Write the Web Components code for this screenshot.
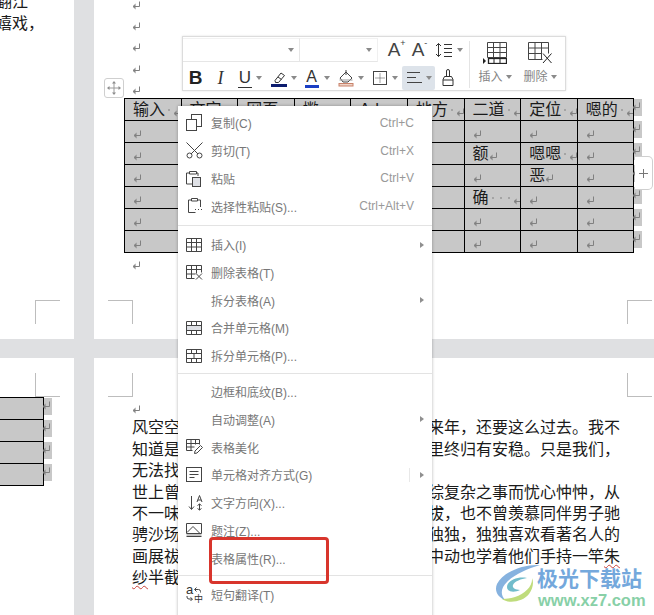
<!DOCTYPE html>
<html lang="zh-CN">
<head>
<meta charset="utf-8">
<title>表格右键菜单</title>
<style>
html, body { margin: 0; padding: 0; overflow: hidden; }
body { width: 654px; height: 615px; font-family: "Liberation Sans", "Noto Sans CJK SC", sans-serif; color: #000; }
</style>
</head>
<body>

<doc-view>
  <doc-page slot="a">
    <crop-mark corner="tl" style="left:35px;top:300px"></crop-mark>
    <doc-text top="-8.7" left="-4">
      <text-line start="翻江"></text-line>
      <text-line start="嬉戏，"></text-line>
    </doc-text>
  </doc-page>

  <doc-page slot="b">
    <crop-mark corner="tr" style="left:14px;top:300px"></crop-mark>
    <crop-mark corner="tl" style="left:533px;top:300px"></crop-mark>
    <doc-text top="-8.7" left="38">
      <text-line mark></text-line>
      <text-line mark></text-line>
      <text-line mark></text-line>
      <text-line mark></text-line>
      <text-line mark></text-line>
      <word-table id="mainTable" style="margin-left:-8px"></word-table>
      <text-line mark></text-line>
    </doc-text>
  </doc-page>

  <doc-page slot="c">
    <crop-mark corner="bl" style="left:35px;top:15px"></crop-mark>
    <doc-text top="39" left="-16">
      <word-table id="sideTable"></word-table>
    </doc-text>
  </doc-page>

  <doc-page slot="d">
    <crop-mark corner="br" style="left:14px;top:15px"></crop-mark>
    <crop-mark corner="bl" style="left:533px;top:15px"></crop-mark>
    <doc-text top="38" left="38">
      <text-line mark></text-line>
      <text-line start="风空空" end="来年，还要这么过去。我不"></text-line>
      <text-line start="知道是" end="里终归有安稳。只是我们，"></text-line>
      <text-line start="无法找"></text-line>
      <text-line start="世上曾" end="综复杂之事而忧心忡忡，从"></text-line>
      <text-line start="不一味" end="拔，也不曾羡慕同伴男子驰"></text-line>
      <text-line start="骋沙场" end="独独，独独喜欢看著名人的"></text-line>
      <text-line start="画展祓" end="中动也学着他们手持一竿" typo-end="朱"></text-line>
      <text-line typo-start="纱" start="半截"></text-line>
    </doc-text>
  </doc-page>
</doc-view>

<move-handle></move-handle>
<add-handle></add-handle>

<float-toolbar>
  <tool-btn slot="top" w="24" style="margin-left:4px"><span style="font-size:19px;line-height:20px;color:#444">A<sup style="font-size:9px;line-height:9px;position:absolute;margin-top:-1px">+</sup></span></tool-btn>
  <tool-btn slot="top" w="24"><span style="font-size:19px;line-height:20px;color:#444">A<sup style="font-size:9px;line-height:9px;position:absolute;margin-top:-1px">-</sup></span></tool-btn>
  <tool-btn slot="top" w="37" arrow>
    <svg width="18" height="16" fill="none" stroke="#333"><path d="M3.500 1.500v13M1 4l2.500-2.500L6 4M1 12l2.500 2.500L6 12M9 2.500h8M9 6.500h8M9 10.500h8M9 14.500h8"/></svg>
  </tool-btn>

  <tool-btn slot="bottom" w="25"><span style="font:bold 19px/20px 'Liberation Sans';color:#222">B</span></tool-btn>
  <tool-btn slot="bottom" w="25"><span style="font:italic 18px/20px 'Liberation Serif';color:#333">I</span></tool-btn>
  <tool-btn slot="bottom" w="34" arrow><span style="font:17px/18px 'Liberation Sans';color:#333;border-bottom:1px solid #333;padding:0 1px">U</span></tool-btn>
  <tool-btn slot="bottom" w="33" arrow>
    <svg width="16" height="18" fill="none" stroke="#333"><path d="M4 11.500l6-7.500 3.500 2.500-6 7H4.500zM7 8l3.500 2.500"/><rect x="0" y="15" width="16" height="3" fill="#0c1c6e" stroke="none"/></svg>
  </tool-btn>
  <tool-btn slot="bottom" w="33" arrow>
    <span style="display:inline-flex;flex-direction:column;align-items:center;width:16px;font:16px/15px 'Liberation Sans';color:#333">A<i style="display:block;width:14px;height:3px;background:#1c3fc4;margin-top:1px"></i></span>
  </tool-btn>
  <tool-btn slot="bottom" w="35" arrow>
    <svg width="16" height="18" fill="none" stroke="#444"><path d="M2 9l6-6 6 6-4 4H5zM8 1v5"/><path d="M1.500 11l13-0" stroke="#999"/><rect x="1" y="14.500" width="14" height="2.500" fill="#eed4c8" stroke="#c9826a"/></svg>
  </tool-btn>
  <tool-btn slot="bottom" w="34" arrow>
    <svg width="16" height="16" fill="none" stroke="#444"><rect x="1.500" y="1.500" width="13" height="13"/><path d="M8 3.500v9M3.500 8h9" stroke-dasharray="1 1"/></svg>
  </tool-btn>
  <tool-btn slot="bottom" w="33" arrow active>
    <svg width="16" height="14" fill="none" stroke="#444"><path d="M1 1.500h13M1 6.500h9M1 11.500h15"/></svg>
  </tool-btn>
  <tool-btn slot="bottom" w="26">
    <svg width="14" height="18" fill="none" stroke="#333"><path d="M5.500 7.500v-5.500a1.500 1.500 0 0 1 3 0v5.500M3.500 7.500h7l1.500 3v6H2v-6zM2 11h10"/></svg>
  </tool-btn>

  <big-btn slot="big" label="插入" w="50">
    <svg width="24" height="22" fill="none" stroke="#444"><path d="M4.500 .5h19v15h-19zM4.500 5.500h19M4.500 10.500h19M10.500 .5v15M17 .5v15"/><rect x="5.500" y="16.500" width="18" height="5" stroke="#222" stroke-width="1.300"/><path d="M11 16.500v5M17 16.500v5" stroke="#222"/><path d="M0 16l3 3-3 3z" fill="#222" stroke="none"/></svg>
  </big-btn>
  <big-btn slot="big" label="删除" w="40">
    <svg width="25" height="22" fill="none" stroke="#444"><path d="M.5 .5h20v11M.5 .5v17h14M.5 6h20M.5 11.500h13M7 .5v17M13.500 .5v17"/><path d="M15 11.500l8.500 9.500M23.500 11.500L15 21" stroke="#222"/></svg>
  </big-btn>
</float-toolbar>

<context-menu>
  <menu-item label="复制(C)" key="Ctrl+C">
    <svg slot="icon" width="16" height="17" fill="none" stroke="#444"><rect x="5.500" y=".5" width="10" height="12" fill="#fff"/><rect x=".5" y="5.500" width="10" height="11" fill="#fff"/></svg>
  </menu-item>
  <menu-item label="剪切(T)" key="Ctrl+X">
    <svg slot="icon" width="17" height="17" fill="none" stroke="#444"><circle cx="3.500" cy="13.500" r="2.500"/><circle cx="13.500" cy="13.500" r="2.500"/><path d="M.5 .5l11.500 11.500M16.500 .5L5 12"/></svg>
  </menu-item>
  <menu-item label="粘贴" key="Ctrl+V">
    <svg slot="icon" width="16" height="17" fill="none" stroke="#444"><path d="M4 3H.5v11H6"/><path d="M3.500 1.500h7V4h-7z"/><path d="M10.500 3H12v3"/><rect x="6.500" y="7.500" width="8" height="9" fill="#dfe1e6"/></svg>
  </menu-item>
  <menu-item label="选择性粘贴(S)..." key="Ctrl+Alt+V">
    <svg slot="icon" width="16" height="16" fill="none" stroke="#444" style="margin-left:2px"><path d="M3.500 2H.5v12.500h7M9.500 2h3v7"/><path d="M3.500 .5h6V3h-6z"/><path d="M7 11.500h1M10 11.500h1M13 11.500h1"/></svg>
  </menu-item>
  <menu-sep style="--above:4.500px;--below:5px"></menu-sep>
  <menu-item label="插入(I)" arrow>
    <svg slot="icon" width="16" height="14" fill="none" stroke="#444"><path d="M.5 .5h15v13H.5zM.5 4.500h15M.5 9h15M5.500 .5v13M10.500 .5v13"/></svg>
  </menu-item>
  <menu-item label="删除表格(T)">
    <svg slot="icon" width="17" height="15" fill="none" stroke="#444"><path d="M.5 .5h15v7M.5 .5v13h8M.5 4.500h15M.5 9h9M5.500 .5v13M10.500 .5v8"/><path d="M10 8.500l6 6M16 8.500l-6 6"/></svg>
  </menu-item>
  <menu-item label="拆分表格(A)" arrow></menu-item>
  <menu-item label="合并单元格(M)">
    <svg slot="icon" width="16" height="14" fill="none" stroke="#444"><rect x=".5" y="4.500" width="15" height="5" fill="#dfe1e6" stroke="none"/><path d="M.5 .5h15v13H.5zM.5 4.500h15M.5 9.500h15M5.500 .5v4M10.500 .5v4M5.500 9.500v4M10.500 9.500v4"/></svg>
  </menu-item>
  <menu-item label="拆分单元格(P)...">
    <svg slot="icon" width="16" height="14" fill="none" stroke="#444"><path d="M.5 .5h15v13H.5zM.5 4.500h15M.5 9.500h15M5.500 .5v4M10.500 .5v4M8 4.500v5M5.500 9.500v4M10.500 9.500v4"/></svg>
  </menu-item>
  <menu-sep></menu-sep>
  <menu-item label="边框和底纹(B)..."></menu-item>
  <menu-item label="自动调整(A)" arrow></menu-item>
  <menu-item label="表格美化">
    <svg slot="icon" width="17" height="16" fill="none" stroke="#444"><path d="M.5 .5h13v5M.5 .5v11h6M.5 4.500h13M.5 8h8M5 .5v11M9.500 .5v5"/><path d="M8.500 14.500l.5-2.500 5.500-5.500 2 2-5.500 5.500z"/></svg>
  </menu-item>
  <menu-item label="单元格对齐方式(G)" arrow divider>
    <svg slot="icon" width="16" height="15" fill="none" stroke="#444"><rect x=".5" y=".5" width="15" height="14"/><path d="M3.500 4.500h9M3.500 7.500h9M3.500 10.500h5"/></svg>
  </menu-item>
  <menu-item label="文字方向(X)...">
    <svg slot="icon" width="15" height="16" fill="none" stroke="#444" style="margin-left:2px"><path d="M3.500 1v13M1 11.500l2.500 3 2.500-3M11.500 9v6M9.500 10.500l2-1.500 2 1.500M9.500 13.500l2 1.500 2-1.500"/><path d="M9 7l2.500-6.500L14 7M9.800 5h3.400"/></svg>
  </menu-item>
  <menu-item label="题注(Z)...">
    <svg slot="icon" width="16" height="15" fill="none" stroke="#444"><path d="M.5 .5h15v10H.5zM1 9.500l6-6 6.500 6.500M.5 13.500h15"/><path d="M.5 12h15" stroke="#888"/></svg>
  </menu-item>
  <menu-item label="表格属性(R)..."></menu-item>
  <menu-sep></menu-sep>
  <menu-item label="短句翻译(T)">
    <svg slot="icon" width="17" height="18" fill="none" stroke="#444" style="overflow:visible"><text x="0" y="9" font-family="Liberation Sans" font-size="13" fill="#333" stroke="none">a</text><text x="8" y="17" font-family="Noto Sans CJK SC" font-size="9" fill="#333" stroke="none">中</text><path d="M9 4.500h3.500a2 2 0 0 1 2 2v1M10.500 2.500l-2 2 2 2M1 11v1a2 2 0 0 0 2 2h3M4.500 12.500l2 1.500-2 2"/></svg>
  </menu-item>
  <menu-item>
    <svg slot="icon" width="16" height="14" fill="none" stroke="#444"><path d="M8 4.500v9M5 7l3-3 3 3"/></svg>
  </menu-item>
</context-menu>

<note-box></note-box>
<site-badge></site-badge>

<script>
const markSvg = '<svg width="9" height="9" viewBox="0 0 9 9" fill="none" stroke="#808080"><path d="M7.500 .5V5.500H2"/><path d="M3.500 3.200L1 5.500l2.500 2.300" fill="#808080"/></svg>'

const viewTemplate = document.createElement('template')
viewTemplate.innerHTML = `
<style>
:host { display: block; width: 654px; height: 615px; overflow: hidden; background: #dfe0e2; }
#grid {
  display: grid;
  grid-template-columns: 74px 560px;
  grid-template-rows: 339px 257px;
  column-gap: 20px;
  row-gap: 19px;
  width: 654px;
}
</style>
<div id="grid">
  <slot name="a"></slot>
  <slot name="b"></slot>
  <slot name="c"></slot>
  <slot name="d"></slot>
</div>`

class DocView extends HTMLElement {
  constructor () {
    super()
    this.attachShadow({ mode: 'open' }).appendChild(viewTemplate.content.cloneNode(true))
  }
}
customElements.define('doc-view', DocView)

class DocPage extends HTMLElement {
  constructor () {
    super()
    this.attachShadow({ mode: 'open' }).innerHTML = `
    <style>
    :host { display: block; position: relative; background: #fff; overflow: hidden; height: 100%; }
    </style>
    <slot></slot>`
  }
}
customElements.define('doc-page', DocPage)

// margin corner marks sit on the page itself, not in the text flow
class CropMark extends HTMLElement {
  constructor () {
    super()
    const c = this.getAttribute('corner')
    const line = '1px solid #bdbdbd'
    const sides = {
      tl: `border-top:${line};border-left:${line}`,
      tr: `border-top:${line};border-right:${line}`,
      bl: `border-bottom:${line};border-left:${line}`,
      br: `border-bottom:${line};border-right:${line}`
    }
    this.attachShadow({ mode: 'open' }).innerHTML = `
    <style>
    :host { display: block; position: absolute; box-sizing: border-box; width: 25px; height: 24px; ${sides[c]}; }
    </style>`
  }
}
customElements.define('crop-mark', CropMark)

class DocText extends HTMLElement {
  constructor () {
    super()
    this.attachShadow({ mode: 'open' }).innerHTML = `
    <style>
    :host { display: block; margin-top: ${this.getAttribute('top')}px; margin-left: ${this.getAttribute('left')}px; }
    </style>
    <slot></slot>`
  }
}
customElements.define('doc-text', DocText)

class TextLine extends HTMLElement {
  constructor () {
    super()
    this.attachShadow({ mode: 'open' })
  }

  connectedCallback () {
    const wavy = t => t ? `<span class="typo">${t}</span>` : ''
    const start = this.getAttribute('start') || ''
    const end = this.getAttribute('end') || ''
    const mark = this.hasAttribute('mark') ? `<span class="mark">${markSvg}</span>` : ''
    this.shadowRoot.innerHTML = `
    <style>
    :host { display: flex; justify-content: space-between; align-items: center; width: 488px; height: 21.4px; font-size: 16px; line-height: 21.4px; white-space: nowrap; color: #1a1a1a; }
    .mark { display: flex; margin-top: 6px; }
    .typo { text-decoration: underline wavy #c9433a 1px; text-underline-offset: 2px; }
    </style>
    <span>${mark}${wavy(this.getAttribute('typo-start'))}${start}</span>
    <span>${end}${wavy(this.getAttribute('typo-end'))}</span>`
  }
}
customElements.define('text-line', TextLine)

class WordTable extends HTMLElement {
  constructor () {
    super()
    this.attachShadow({ mode: 'open' })
  }

  // rows: array of rows, each cell is [text, number of space dots]
  setData (rows, colWidth) {
    let html = ''
    rows.forEach((row, r) => {
      html += '<div class="row">'
      row.forEach(cell => {
        let dots = ''
        for (let i = 0; i < (cell[1] || 0); i++) dots += '<i></i>'
        html += `<div class="cell"><span>${cell[0] || ''}</span>${dots}<b>${markSvg}</b></div>`
      })
      html += `<div class="end"><u>${markSvg}</u></div></div>`
    })
    this.shadowRoot.innerHTML = `
    <style>
    :host { display: block; font-size: 16px; color: #1a1a1a; }
    .row { display: flex; height: 22px; }
    .cell {
      box-sizing: border-box; flex: none; width: ${colWidth}px; height: 23px;
      display: flex; align-items: center; padding-left: 8px; overflow: hidden;
      background: #c8c8c8; border: 1px solid #000; margin-right: -1px; white-space: nowrap;
    }
    .cell span { line-height: 21px; }
    i { flex: none; display: flex; width: 8px; height: 8px; position: relative; }
    i::after { content: ""; position: absolute; left: 3px; top: 3px; width: 2px; height: 2px; border-radius: 50%; background: #999; }
    b { display: flex; flex: none; margin-top: 6px; }
    .end { margin-left: 1px; width: 8px; height: 17px; background: #c8c8c8; margin-top: 1px; }
    u { display: flex; margin-top: 3px; margin-left: -2px; }
    </style>${html}`
  }
}
customElements.define('word-table', WordTable)

class MoveHandle extends HTMLElement {
  constructor () {
    super()
    this.attachShadow({ mode: 'open' }).innerHTML = `
    <style>
    :host { position: absolute; left: 104px; top: 78px; box-sizing: border-box; width: 20px; height: 20px; background: #fff; border: 1px solid #cfcfcf; border-radius: 3px; display: flex; align-items: center; justify-content: center; }
    </style>
    <svg width="14" height="14" viewBox="0 0 14 14" fill="#8c8c8c" stroke="#9a9a9a"><path d="M7 2v10M2 7h10" fill="none"/><path d="M7 0l2 2.500H5zM7 14l2-2.500H5zM0 7l2.500-2v4zM14 7l-2.500-2v4z" stroke="none"/></svg>`
  }
}
customElements.define('move-handle', MoveHandle)

class AddHandle extends HTMLElement {
  constructor () {
    super()
    this.attachShadow({ mode: 'open' }).innerHTML = `
    <style>
    :host { position: absolute; left: 635px; top: 156px; box-sizing: border-box; width: 18px; height: 34px; background: #fff; border: 1px solid #cfcfcf; border-left: 0; border-radius: 0 5px 5px 0; display: flex; align-items: center; justify-content: center; }
    </style>
    <svg width="9" height="9" stroke="#777"><path d="M4.500 0v9M0 4.500h9"/></svg>`
  }
}
customElements.define('add-handle', AddHandle)

const toolbarTemplate = document.createElement('template')
toolbarTemplate.innerHTML = `
<style>
:host {
  position: absolute; left: 182px; top: 36px; box-sizing: border-box; width: 384px; height: 55px;
  background: #fff; border: 1px solid #dcdcdc; box-shadow: 0 0 2px rgba(0,0,0,.12);
  display: flex; padding-top: 1px;
}
#left { display: flex; flex-direction: column; width: 286px; }
#top { display: flex; height: 25px; align-items: stretch; }
.combo { box-sizing: border-box; height: 24px; border-bottom: 1px solid #e6e6e6; border-top: 1px solid #f2f2f2; display: flex; align-items: center; justify-content: flex-end; padding-right: 5px; }
#name { width: 117px; border-right: 1px solid #e6e6e6; }
#size { width: 78px; border-right: 1px solid #f0f0f0; }
.caret { width: 0; height: 0; border: 3px solid transparent; border-top: 4px solid #8a8a8a; border-bottom: 0; }
#bottom { display: flex; margin-top: 3px; height: 24px; }
#sep { width: 1px; height: 47px; background: #e4e4e4; margin-top: 3px; }
#big { display: flex; }
</style>
<div id="left">
  <div id="top">
    <div class="combo" id="name"><span class="caret"></span></div>
    <div class="combo" id="size"><span class="caret"></span></div>
    <slot name="top"></slot>
  </div>
  <div id="bottom"><slot name="bottom"></slot></div>
</div>
<div id="sep"></div>
<div id="big"><slot name="big"></slot></div>`

class FloatToolbar extends HTMLElement {
  constructor () {
    super()
    this.attachShadow({ mode: 'open' }).appendChild(toolbarTemplate.content.cloneNode(true))
  }
}
customElements.define('float-toolbar', FloatToolbar)

class ToolBtn extends HTMLElement {
  constructor () {
    super()
    this.attachShadow({ mode: 'open' })
  }

  connectedCallback () {
    const active = this.hasAttribute('active')
    this.shadowRoot.innerHTML = `
    <style>
    :host { box-sizing: border-box; flex: none; width: ${this.getAttribute('w')}px; height: 24px; display: flex; align-items: center; justify-content: center; gap: 4px; border-radius: 2px; ${active ? 'background:#dde3ea;' : ''} }
    .caret { width: 0; height: 0; border: 3px solid transparent; border-top: 4px solid #8a8a8a; border-bottom: 0; }
    </style>
    <slot></slot>${this.hasAttribute('arrow') ? '<span class="caret"></span>' : ''}`
  }
}
customElements.define('tool-btn', ToolBtn)

class BigBtn extends HTMLElement {
  constructor () {
    super()
    this.attachShadow({ mode: 'open' })
  }

  connectedCallback () {
    this.shadowRoot.innerHTML = `
    <style>
    :host { flex: none; width: ${this.getAttribute('w')}px; display: flex; flex-direction: column; align-items: center; padding-top: 4px; }
    #label { display: flex; align-items: center; gap: 3px; margin-top: 5px; font-size: 12px; line-height: 16px; color: #858585; }
    .caret { width: 0; height: 0; border: 3px solid transparent; border-top: 4px solid #8a8a8a; border-bottom: 0; }
    </style>
    <slot></slot>
    <div id="label">${this.getAttribute('label')}<span class="caret"></span></div>`
  }
}
customElements.define('big-btn', BigBtn)

class ContextMenu extends HTMLElement {
  constructor () {
    super()
    this.attachShadow({ mode: 'open' }).innerHTML = `
    <style>
    :host { position: absolute; left: 178px; top: 106px; box-sizing: border-box; width: 254px; height: 530px; padding-top: 3px; background: #fff; box-shadow: 0 0 3px rgba(0,0,0,.3); }
    </style>
    <slot></slot>`
  }
}
customElements.define('context-menu', ContextMenu)

class MenuItem extends HTMLElement {
  constructor () {
    super()
    this.attachShadow({ mode: 'open' })
  }

  connectedCallback () {
    const key = this.getAttribute('key') || ''
    const divider = this.hasAttribute('divider') ? '<span id="div"></span>' : ''
    const arrow = this.hasAttribute('arrow') ? '<span id="arrow"></span>' : ''
    this.shadowRoot.innerHTML = `
    <style>
    :host { display: grid; grid-template-columns: 25px 1fr auto 18px; align-items: center; height: 27.8px; padding-left: 8px; font-size: 12px; color: #777; white-space: nowrap; }
    #icon { display: flex; align-items: center; }
    #key { color: #999; font-size: 12px; }
    #end { position: relative; display: flex; align-items: center; height: 100%; }
    #arrow { position: absolute; left: 6px; width: 0; height: 0; border: 3px solid transparent; border-left: 4px solid #8f8f8f; border-right: 0; }
    #div { position: absolute; left: -5px; top: 7px; width: 1px; height: 14px; background: #e8e8e8; }
    </style>
    <div id="icon"><slot name="icon"></slot></div>
    <div>${this.getAttribute('label') || ''}</div>
    <div id="key">${key}</div>
    <div id="end">${divider}${arrow}</div>`
  }
}
customElements.define('menu-item', MenuItem)

class MenuSep extends HTMLElement {
  constructor () {
    super()
    this.attachShadow({ mode: 'open' }).innerHTML = `
    <style>
    :host { display: block; height: 1px; background: #e3e3e3; margin: var(--above, 3px) 0 var(--below, 4px) 0; }
    </style>`
  }
}
customElements.define('menu-sep', MenuSep)

class NoteBox extends HTMLElement {
  constructor () {
    super()
    this.attachShadow({ mode: 'open' }).innerHTML = `
    <style>
    :host { position: absolute; left: 209px; top: 537px; box-sizing: border-box; width: 120px; height: 47px; border: 3px solid #d8352c; border-radius: 4px; }
    </style>`
  }
}
customElements.define('note-box', NoteBox)

class SiteBadge extends HTMLElement {
  constructor () {
    super()
    this.attachShadow({ mode: 'open' }).innerHTML = `
    <style>
    :host { position: absolute; left: 495px; top: 564px; display: flex; }
    #words { display: flex; flex-direction: column; align-items: flex-start; margin-left: -3px; padding-top: 3px; }
    #cn { font: bold 21px/21px "Noto Sans CJK SC", sans-serif; color: #74a8dc; white-space: nowrap; }
    #en { font: bold 16.500px/18px "Liberation Sans", sans-serif; color: #88d0a7; margin-top: 3px; margin-left: 1px; }
    </style>
    <svg width="45" height="41" viewBox="0 0 45 41">
      <path d="M45 1C28 0 8 8 2 20c-3 7 1 13 8 16-5-6-4-12 2-18C20 10 32 5 45 1z" fill="#86b2df"/>
      <path d="M32 14c-10-2-20 3-20 9 0 5 7 6 13 3-5 0-8-2-7-5 2-4 8-6 14-7z" fill="#71bccb"/>
      <path d="M37 14c1 8-7 16-17 19-5 1.500-9 2-13 2 6 5 21 3 27-5 4-5 5-12 3-16z" fill="#bfdc7c"/>
    </svg>
    <div id="words"><div id="cn">极光下载站</div><div id="en">www.xz7.com</div></div>`
  }
}
customElements.define('site-badge', SiteBadge)

const mainRows = [
  [['输入', 1], ['文字', 1], ['网页', 1], ['撇', 1], ['Ad', 1], ['地方', 1], ['二道', 1], ['定位', 1], ['嗯的', 1]],
  [[], [], [], [], [], [], [], [], []],
  [[], [], [], [], [], [], ['额'], ['嗯嗯', 1], []],
  [[], [], [], [], [], [], [], ['恶'], []],
  [[], [], [], [], [], [], ['确', 3], [], []],
  [[], [], [], [], [], [], [], [], []],
  [[], [], [], [], [], [], [], [], []]
]
document.getElementById('mainTable').setData(mainRows, 57.6)
document.getElementById('sideTable').setData([[[]], [[]], [[]], [[]]], 60)
document.querySelectorAll('#sideTable').forEach(t => {
  t.shadowRoot.querySelectorAll('.cell b').forEach(b => b.remove())
})
</script>
</body>
</html>
